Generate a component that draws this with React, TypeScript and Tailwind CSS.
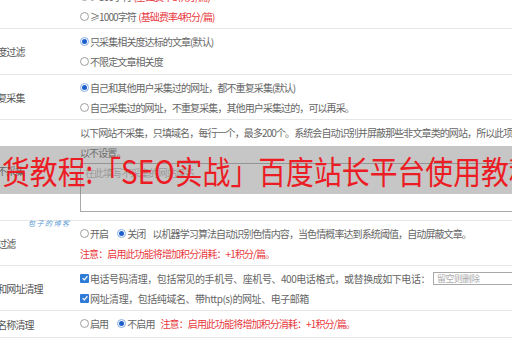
import React from "react";

function Radio({ on = false }: { on?: boolean }) {
  if (on)
    return (
      <span className="inline-flex w-[9px] h-[9px] rounded-full border border-[#86aee6] bg-white items-center justify-center shrink-0">
        <span className="w-[5px] h-[5px] rounded-full bg-[#1b5fcf]" />
      </span>
    );
  return <span className="inline-block w-[9px] h-[9px] rounded-full border border-[#a0a0a0] bg-white shrink-0" />;
}

function Check() {
  return (
    <span className="inline-flex w-[9px] h-[9px] rounded-[1px] bg-[#2f7bd8] items-center justify-center shrink-0">
      <svg viewBox="0 0 10 10" className="w-[8px] h-[8px]">
        <path d="M2 5.2 L4.2 7.3 L8 2.8" fill="none" stroke="#fff" strokeWidth="1.6" />
      </svg>
    </span>
  );
}

function Line({ children, extra = "" }: { children: React.ReactNode; extra?: string }) {
  return <div className={`h-[20px] flex items-center gap-[1px] whitespace-nowrap ${extra}`}>{children}</div>;
}

function Row({
  label,
  children,
  extra = "",
}: {
  label: string;
  children: React.ReactNode;
  extra?: string;
}) {
  return (
    <div className="flex border-b border-[#e6e6e6]">
      <div className="w-[101px] -ml-[21px] shrink-0 flex items-center whitespace-nowrap text-[#555]">{label}</div>
      <div className={`flex-1 pt-[2px] ${extra || "pb-[2px]"}`}>{children}</div>
    </div>
  );
}

const Red = ({ children }: { children: React.ReactNode }) => <span className="text-[#e8383d]">{children}</span>;

export default function App() {
  return (
    <div className="relative w-[512px] h-[340px] overflow-hidden bg-white text-[#666] text-[10px] tracking-[-0.9px] font-['Noto_Sans_CJK_SC','Noto_Sans',sans-serif]">
      <div className="-mt-[56px] flex flex-col">
        <Row label="文章字数">
          <Line>
            <Radio />
            <span>不限字数</span>
          </Line>
          <Line>
            <Radio on />
            <span>≥300字符</span>
            <Red>&nbsp;(基础费率2积分/篇)</Red>
          </Line>
          <Line>
            <Radio />
            <span>≥500字符</span>
            <Red>&nbsp;(基础费率3积分/篇)</Red>
          </Line>
          <Line>
            <Radio />
            <span>≥1000字符</span>
            <Red>&nbsp;(基础费率4积分/篇)</Red>
          </Line>
        </Row>
        <Row label="相关度过滤" extra="pb-[3px]">
          <Line>
            <Radio on />
            <span>只采集相关度达标的文章(默认)</span>
          </Line>
          <Line>
            <Radio />
            <span>不限定文章相关度</span>
          </Line>
        </Row>
        <Row label="不重复采集">
          <Line>
            <Radio on />
            <span>自己和其他用户采集过的网址，都不重复采集(默认)</span>
          </Line>
          <Line>
            <Radio />
            <span>自己采集过的网址，不重复采集，其他用户采集过的，可以再采。</span>
          </Line>
        </Row>
        <Row label="网站不采集" extra="pb-[8px]">
          <Line>
            <span>以下网站不采集，只填域名，每行一个，最多200个。系统会自动识别并屏蔽那些非文章类的网站，所以此项可</span>
          </Line>
          <Line>
            <span>以不设置。</span>
          </Line>
          <textarea
            className="mt-[1px] block w-[600px] h-[49px] border border-[#a9a9a9] resize-none px-[4px] py-[2px] text-[10px] leading-[14px] outline-none placeholder:text-[#b5b5b5]"
            placeholder="在此填写不采集的网站域名"
          />
        </Row>
        <Row label="色情过滤">
          <Line>
            <Radio />
            <span className="mr-[8px]">开启</span>
            <Radio on />
            <span className="mr-[6px]">关闭</span>
            <span>以机器学习算法自动识别色情内容，当色情概率达到系统阈值，自动屏蔽文章。</span>
          </Line>
          <Line>
            <Red>注意：启用此功能将增加积分消耗：+1积分/篇。</Red>
          </Line>
        </Row>
        <Row label="电话和网址清理">
          <Line extra="tracking-[-0.45px]">
            <Check />
            <span>电话号码清理，包括常见的手机号、座机号、400电话格式，或替换成如下电话：</span>
            <span className="ml-[2px] inline-block w-[80px] h-[13px] border border-[#a9a9a9] px-[3px] text-[9px] leading-[11px] text-[#aaa] tracking-[-0.5px]">
              留空则删除
            </span>
          </Line>
          <Line extra="tracking-[-0.45px]">
            <Check />
            <span>网址清理，包括纯域名、带http(s)的网址、电子邮箱</span>
          </Line>
        </Row>
        <Row label="网站名称清理" extra="pb-[4px]">
          <Line>
            <Radio />
            <span className="mr-[8px]">启用</span>
            <Radio on />
            <span className="mr-[5px]">不启用</span>
            <Red>注意：启用此功能将增加积分消耗：+1积分/篇。</Red>
          </Line>
        </Row>
      </div>

      {/* watermark */}
      <div className="absolute left-[28px] top-[218px] text-[7px] italic tracking-[1.5px] text-[#5b9bd5]">包子的博客</div>

      {/* overlay band */}
      <div className="absolute left-0 top-[146px] w-[512px] h-[48px] bg-[rgba(120,120,120,0.42)] overflow-hidden flex items-center">
        <span className="inline-block ml-[2px] origin-left scale-x-[0.87] whitespace-nowrap text-[32px] leading-[40px] tracking-[0px] text-[#ec1c24] font-['Noto_Sans_CJK_SC',sans-serif]">
          货教程:「SEO实战」百度站长平台使用教程
        </span>
      </div>
    </div>
  );
}
